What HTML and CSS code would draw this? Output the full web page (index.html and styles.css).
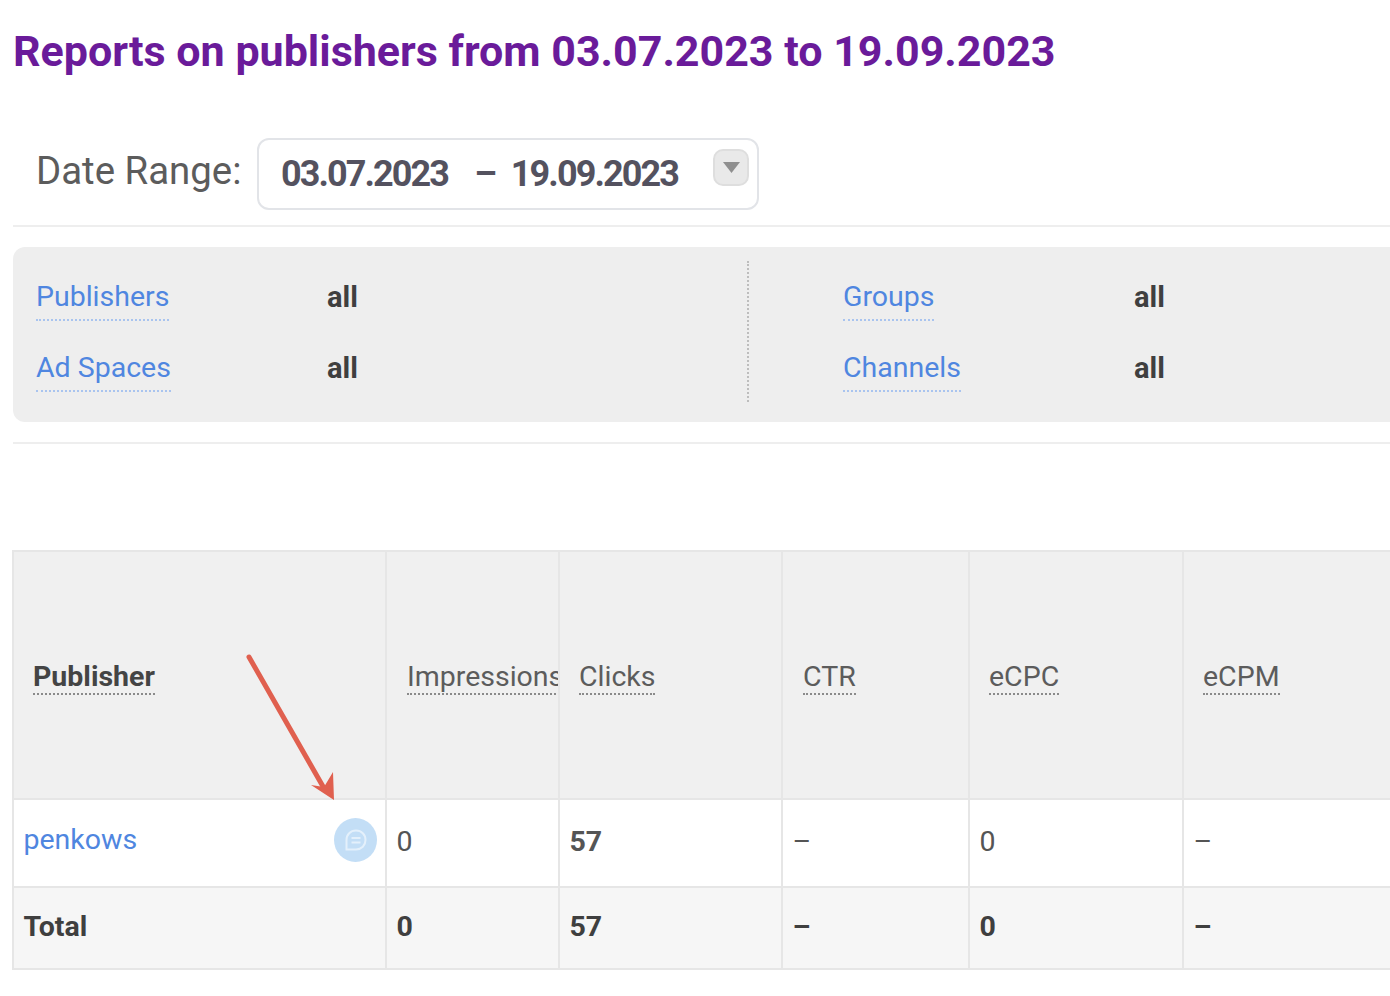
FILE: index.html
```html
<!DOCTYPE html>
<html lang="en">
<head>
<meta charset="utf-8">
<title>Reports on publishers</title>
<link rel="stylesheet" href="styles.css">
</head>
<body>
<main class="page">
  <h1 class="title">Reports on publishers from 03.07.2023 to 19.09.2023</h1>
  <div class="range-row">
    <span class="range-label">Date Range:</span>
    <div class="range-box">
      <span class="range-date">03.07.2023</span>
      <span class="range-dash">–</span>
      <span class="range-date">19.09.2023</span>
      <span class="range-btn"><svg width="17" height="11" viewBox="0 0 17 11"><path d="M0 0h17L8.500 11z" fill="#8f8f8f"/></svg></span>
    </div>
  </div>
  <div class="filters-wrap">
    <section class="filters">
      <div class="filter-col">
        <div class="filter-row"><a class="filter-link">Publishers</a><b class="filter-val">all</b></div>
        <div class="filter-row"><a class="filter-link">Ad Spaces</a><b class="filter-val">all</b></div>
      </div>
      <div class="filter-col second">
        <div class="filter-row"><a class="filter-link">Groups</a><b class="filter-val">all</b></div>
        <div class="filter-row"><a class="filter-link">Channels</a><b class="filter-val">all</b></div>
      </div>
    </section>
  </div>
  <table class="report">
    <colgroup><col class="c1"><col class="c2"><col class="c3"><col class="c4"><col class="c5"><col class="c6"></colgroup>
    <thead>
      <tr>
        <th class="pub-head"><span class="dotted strong">Publisher</span>
          <svg class="arrow" width="100" height="156" viewBox="0 0 100 156"><path d="M3 3 L79 136" stroke="#e0604f" stroke-width="5" stroke-linecap="round" fill="none"/><path d="M88 146 L65 131 L78 133 L87 118z" fill="#e0604f"/></svg>
        </th>
        <th class="wide"><span class="dotted">Impressions</span></th>
        <th><span class="dotted">Clicks</span></th>
        <th class="wide"><span class="dotted">CTR</span></th>
        <th><span class="dotted">eCPC</span></th>
        <th><span class="dotted">eCPM</span></th>
      </tr>
    </thead>
    <tbody>
      <tr class="data">
        <td class="pub-cell"><a class="pub-link">penkows</a>
          <span class="chat"><svg width="26" height="26" viewBox="0 0 26 26" fill="none" stroke="#e4f0fb" stroke-width="2"><path d="M13 3.500c5.500 0 9.500 4 9.500 9.500s-4 9.500-9.500 9.500H3.500V13C3.500 7.500 7.500 3.500 13 3.500z"/><path d="M8.500 11h9M8.500 15.500h9"/></svg></span>
        </td>
        <td>0</td><td><b>57</b></td><td>–</td><td>0</td><td>–</td>
      </tr>
      <tr class="total">
        <td>Total</td><td>0</td><td>57</td><td>–</td><td>0</td><td>–</td>
      </tr>
    </tbody>
  </table>
</main>
</body>
</html>
```
FILE: styles.css
```css
* { box-sizing: border-box; }
html, body { margin: 0; height: 100%; overflow: hidden; background: #fff; }
body { font-family: Roboto, "Liberation Sans", sans-serif; color: #4a4a4a; }
.page { width: 1390px; height: 996px; padding: 24px 0 0 13px; overflow: hidden; }
.title { margin: 0; font-size: 43px; line-height: 54px; font-weight: 700; color: #6a1b9a; white-space: nowrap; }
.range-row { display: flex; align-items: center; margin-top: 61px; height: 88px; padding-left: 23px; padding-bottom: 17px; border-bottom: 2px solid #eeeeee; }
.range-label { font-size: 38.400px; color: #5c5c5c; width: 221px; position: relative; top: -3px; }
.range-box { display: flex; align-items: center; width: 502px; height: 72px; border: 2px solid #e2e4e8; border-radius: 12px; padding-left: 22px; position: relative; }
.range-date { font-size: 36px; font-weight: 700; color: #54525f; letter-spacing: -1.900px; }
.range-dash { font-size: 36px; font-weight: 700; color: #54525f; margin: 0 14px 0 26px; }
.range-btn { position: absolute; right: 8px; top: 9px; width: 36px; height: 37px; display: flex; align-items: center; justify-content: center; background: #e9e9e9; border: 2px solid #dedede; border-radius: 10px; }
.filters-wrap { margin-top: 20px; width: 1377px; padding-bottom: 20px; border-bottom: 2px solid #eeeeee; }
.filters { display: flex; height: 175px; background: #eeeeee; border-radius: 12px 0 0 12px; padding: 14px 0 0 23px; }
.filter-col { width: 713px; height: 141px; border-right: 2px dotted #bdbdbd; }
.filter-col.second { width: auto; flex: 1; border: 0; padding-left: 94px; }
.filter-row { display: grid; grid-template-columns: 291px auto; justify-content: start; align-items: start; height: 71px; padding-top: 16px; }
.filter-link { justify-self: start; font-size: 28.500px; line-height: 40px; padding-bottom: 2px; color: #4f86e0; border-bottom: 2px dotted #a9c4ef; }
.filter-val { font-size: 29px; line-height: 40px; color: #3f3f3f; }
.report { margin: 106px 0 0 -1px; width: 1378px; table-layout: fixed; border-collapse: collapse; border-top: 2px solid #e6e6e6; }
.c1 { width: 373px; } .c2 { width: 173px; } .c3 { width: 223px; } .c4 { width: 187px; } .c5 { width: 214px; } .c6 { width: 208px; }
.report th, .report td { border: 2px solid #e6e6e6; border-top: 0; text-align: left; font-size: 28.500px; white-space: nowrap; overflow: hidden; }
.report th { height: 248px; background: #f0f0f0; font-weight: 400; color: #5c5c5c; padding: 3px 0 0 19px; }
.report th.wide { padding-left: 20px; }
.report td { padding: 0 0 4px 9.500px; color: #555555; }
.dotted { border-bottom: 2px dotted #8a8a8a; }
.strong { font-weight: 700; color: #444444; }
.report .pub-head { position: relative; overflow: visible; }
.arrow { position: absolute; left: 232px; top: 102px; z-index: 2; }
.data td { height: 88px; }
.total td { height: 82px; background: #f6f6f6; font-weight: 700; color: #3f3f3f; }
.pub-cell { position: relative; }
.pub-link { color: #4f86e0; position: relative; top: -2px; }
.chat { position: absolute; left: 320px; top: 18px; width: 43px; height: 44px; border-radius: 50%; background: #c3def6; display: flex; align-items: center; justify-content: center; }
```
